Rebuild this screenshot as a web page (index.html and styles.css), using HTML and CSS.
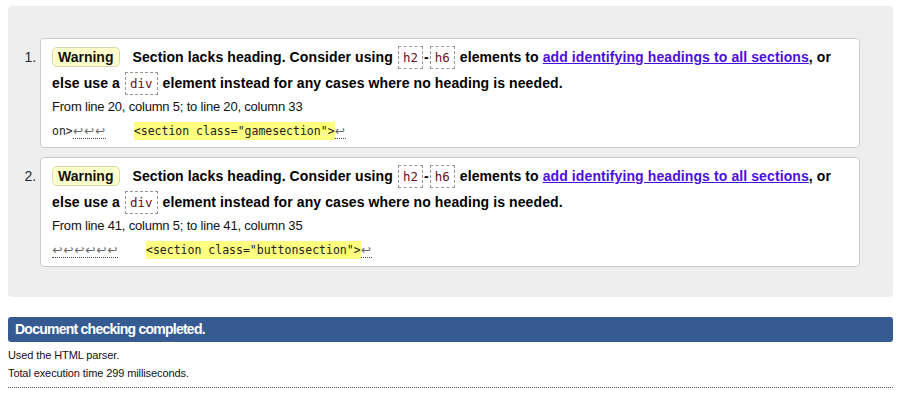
FILE: index.html
```html
<!DOCTYPE html>
<html lang="en">
<head>
<meta charset="utf-8">
<title>Validator results</title>
<link rel="stylesheet" href="styles.css">
</head>
<body>
<div class="results">
  <ol class="messages">
    <li class="msg">
      <p class="message"><span class="badge">Warning</span><span class="text">Section lacks heading. Consider using <code>h2</code>-<code>h6</code> elements to <a href="#">add identifying headings to all sections</a>, or else use a <code>div</code> element instead for any cases where no heading is needed.</span></p>
      <p class="location">From line 20, column 5; to line 20, column 33</p>
      <p class="extract"><span class="pre">on&gt;</span><span class="lfs"><span class="lf">↩</span><span class="lf">↩</span><span class="lf">↩</span></span><span class="sp"></span><b class="hl">&lt;section class="gamesection"&gt;</b><span class="lfs"><span class="lf">↩</span></span></p>
    </li>
    <li class="msg">
      <p class="message"><span class="badge">Warning</span><span class="text">Section lacks heading. Consider using <code>h2</code>-<code>h6</code> elements to <a href="#">add identifying headings to all sections</a>, or else use a <code>div</code> element instead for any cases where no heading is needed.</span></p>
      <p class="location">From line 41, column 5; to line 41, column 35</p>
      <p class="extract"><span class="lfs"><span class="lf">↩</span><span class="lf">↩</span><span class="lf">↩</span><span class="lf">↩</span><span class="lf">↩</span><span class="lf">↩</span></span><span class="sp"></span><b class="hl">&lt;section class="buttonsection"&gt;</b><span class="lfs"><span class="lf">↩</span></span></p>
    </li>
  </ol>
</div>
<h2 class="done">Document checking completed.</h2>
<p class="note first">Used the HTML parser.</p>
<p class="note">Total execution time 299 milliseconds.</p>
<hr class="rule">
</body>
</html>
```

FILE: styles.css
```css
html, body {
  margin: 0;
  padding: 0;
  background: #fff;
}
body {
  padding: 6px 16px 0 8px;
  font-family: "Liberation Sans", Arial, sans-serif;
  color: #000;
}
.results {
  background: #eeeeee;
  border-radius: 4px;
  padding: 32px 33px 30px 32px;
}
.messages {
  margin: 0;
  padding: 0;
  display: flex;
  flex-direction: column;
  gap: 9px;
  list-style: decimal outside;
  color: #1c2a3a;
  font-size: 14px;
}
.msg {
  background: #fff;
  border: 1px solid #cccccc;
  border-radius: 4px;
  padding: 5px 12px 3px 11px;
}
.msg::marker {
  color: #1c2a3a;
}
.message {
  margin: 0;
  font-weight: bold;
  font-size: 14px;
  line-height: 26px;
  color: #000;
}
.badge {
  display: inline-block;
  background: #ffffcc;
  border: 1px solid #d8d8b0;
  border-radius: 5px;
  padding: 0 6px 0 5px;
  line-height: 18px;
  margin-right: 12px;
  color: #111;
}
.text {
  letter-spacing: 0.1px;
}
code {
  font-family: "DejaVu Sans Mono", "Liberation Mono", monospace;
  font-weight: normal;
  font-size: 12.5px;
  line-height: 14px;
  color: #6b1020;
  border: 1px dashed #999;
  padding: 3px 4px;
  margin: 0 1px;
  letter-spacing: 0;
}
a {
  color: #4a0fe0;
  text-decoration: underline;
}
.location {
  margin: 0;
  font-size: 13px;
  letter-spacing: -0.2px;
  line-height: 22px;
  color: #111;
}
.extract {
  margin: 0;
  height: 26px;
  font-family: "DejaVu Sans Mono", "Liberation Mono", monospace;
  font-size: 11.5px;
  line-height: 26px;
  color: #222;
  white-space: nowrap;
  overflow: hidden;
}
.lfs {
  display: inline-block;
  border-bottom: 1px dotted #444;
  line-height: 14px;
  vertical-align: baseline;
}
.lf {
  display: inline-block;
  width: 11px;
  text-align: center;
  color: #666;
  font-family: "DejaVu Sans", sans-serif;
  font-size: 12px;
}
.sp {
  display: inline-block;
  width: 28px;
}
.hl {
  font-weight: normal;
  background: #ffff80;
  color: #222;
  padding: 2px 0;
}
.done {
  margin: 20px 0 0;
  background: #365a92;
  color: #fff;
  font-size: 14px;
  letter-spacing: -0.75px;
  font-weight: bold;
  line-height: 25px;
  padding: 0 7px;
  border-radius: 3px;
}
.note {
  margin: 0;
  font-size: 11px;
  letter-spacing: -0.1px;
  line-height: 18px;
  color: #111;
}
.note.first {
  margin-top: 4px;
}
.rule {
  margin: 5px 0 0;
  border: 0;
  border-top: 1px dotted #555;
  height: 0;
}
```
